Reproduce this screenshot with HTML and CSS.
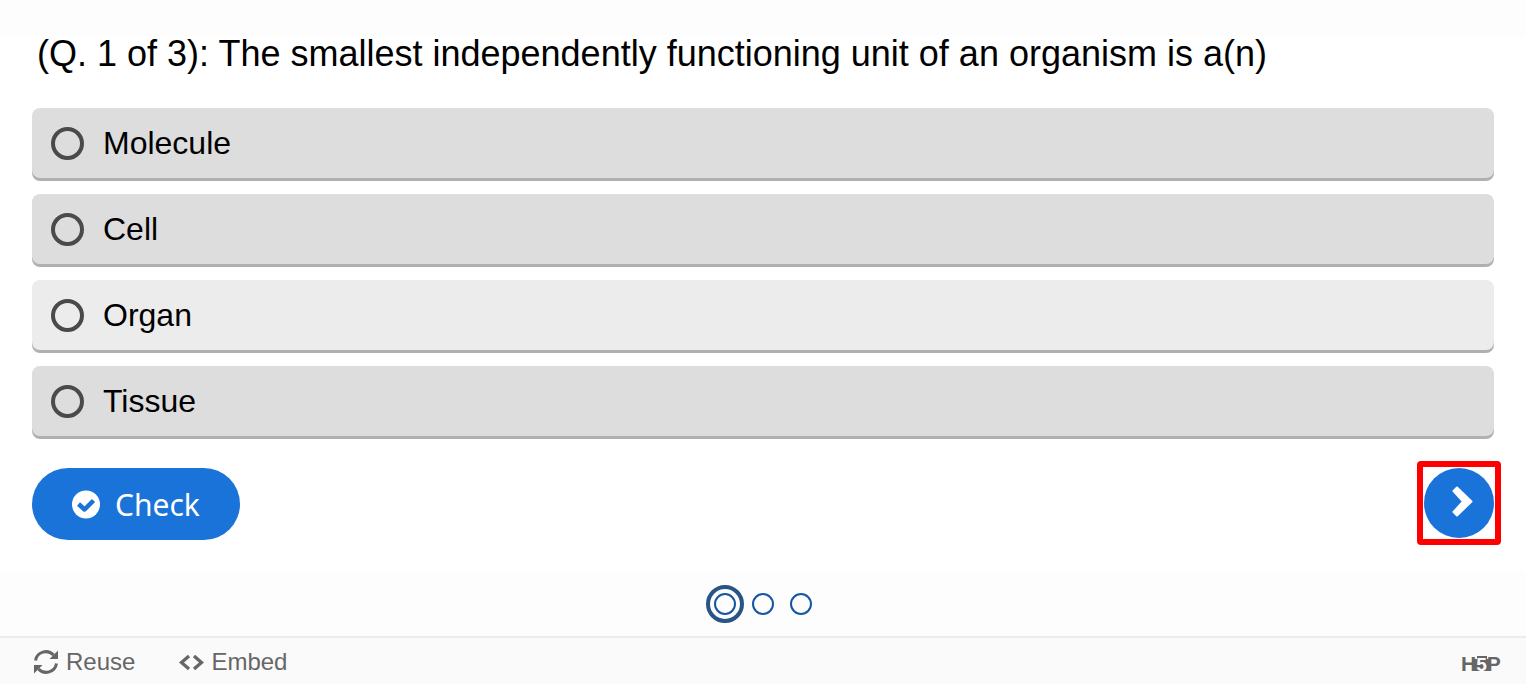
FILE: index.html
```html
<!DOCTYPE html>
<html lang="en">
<head>
  <meta charset="UTF-8" />
  <meta name="viewport" content="width=device-width, initial-scale=1.0"/>
  <title>Question Set</title>
  <link rel="stylesheet" href="styles.css">
</head>
<body>

<form class="question" onsubmit="return false">
  <h2 id="intro">(Q. 1 of 3): The smallest independently functioning unit of an organism is a(n)</h2>

  <div class="answers" role="radiogroup" aria-labelledby="intro">
    <label class="answer"><input type="radio" name="answer" value="molecule"> Molecule</label>
    <label class="answer"><input type="radio" name="answer" value="cell"> Cell</label>
    <label class="answer active"><input type="radio" name="answer" value="organ"> Organ</label>
    <label class="answer"><input type="radio" name="answer" value="tissue"> Tissue</label>
  </div>

  <div class="buttons">
    <button type="submit" class="check">
      <svg width="28" height="28" viewBox="0 0 28 28" aria-hidden="true">
        <circle cx="14" cy="14.500" r="14" fill="#fff"/>
        <path d="M6.500 14l6 5.500 9-9" fill="none" stroke="#1a73d9" stroke-width="4.500" stroke-linejoin="round"/>
      </svg>
      Check
    </button>
    <div class="next-frame">
      <button type="button" class="next" aria-label="Next question">
        <svg width="70" height="70" viewBox="0 0 70 70" aria-hidden="true">
          <path d="M33 19.500L47.500 33.500 33 47.500 29.500 44 39 33.500 29.500 23z" fill="#fff" stroke="#fff" stroke-width="2" stroke-linejoin="round"/>
        </svg>
      </button>
    </div>
  </div>
</form>

<nav class="dots" aria-label="Questions">
  <a href="#q1" class="dot current" aria-label="Question 1"></a>
  <a href="#q2" class="dot" aria-label="Question 2"></a>
  <a href="#q3" class="dot" aria-label="Question 3"></a>
</nav>

<footer>
  <button type="button" class="action">
    <svg width="26" height="26" viewBox="0 0 26 26" aria-hidden="true">
      <path d="M2.500 11.500A10.500 10.500 0 0 1 20.500 6M23.500 14.500A10.500 10.500 0 0 1 5.500 20" fill="none" stroke="#666" stroke-width="3"/>
      <path d="M25 1.500V10h-8.500zM1 24.500V16h8.500z" fill="#666"/>
    </svg>
    Reuse
  </button>
  <button type="button" class="action">
    <svg width="26" height="26" viewBox="0 0 26 26" aria-hidden="true">
      <path d="M11 7L3.500 13.500 11 20M16 7l7.500 6.500L16 20" fill="none" stroke="#666" stroke-width="3.300"/>
    </svg>
    Embed
  </button>
  <a href="#h5p" class="logo" aria-label="H5P">
    <svg width="42" height="26" viewBox="0 0 42 26" aria-hidden="true">
      <path d="M13 10h3V7h10v3h3v12H13z" fill="#666"/>
      <text x="0" y="22">H<tspan class="five">5</tspan>P</text>
    </svg>
  </a>
</footer>

</body>
</html>
```

FILE: styles.css
```css
* {
  box-sizing: border-box;
}
body {
  margin: 0;
  padding-top: 36px;
  font-family: "Liberation Sans", Arial, sans-serif;
  font-size: 32px;
  background: #fdfdfd;
  color: #000;
}
button {
  border: 0;
  cursor: pointer;
}
svg {
  display: block;
}
.question {
  background: #fff;
  padding: 0 32px 32px;
}
.question h2 {
  margin: 0 0 36px;
  padding-left: 5px;
  font-size: 36px;
  font-weight: normal;
  line-height: 36px;
}
.answers {
  display: grid;
  gap: 13px;
}
.answer {
  display: flex;
  align-items: center;
  gap: 19px;
  padding: 17px 19px;
  line-height: 36px;
  background: #ddd;
  border-radius: 8px;
  box-shadow: 0 3px 0 #b0b0b0;
  margin-bottom: 3px;
  cursor: pointer;
}
.answer.active {
  background: #ececec;
}
.answer input {
  appearance: none;
  width: 33px;
  height: 33px;
  margin: 0;
  border: 4px solid #4a4a4a;
  border-radius: 50%;
}
.answer input:checked {
  background: #1a73d9;
}
.buttons {
  display: flex;
  justify-content: space-between;
  align-items: flex-start;
  margin-top: 29px;
}
.check {
  display: flex;
  align-items: center;
  gap: 15px;
  height: 72px;
  padding: 0 40px;
  border-radius: 36px;
  background: #1a73d9;
  color: #fff;
  font-family: "Noto Sans", sans-serif;
  font-size: 30px;
}
.check svg {
  overflow: visible;
}
.next-frame {
  border: 6px solid #f00;
  border-radius: 4px;
  padding: 1px;
  margin: -7px;
}
.next {
  display: block;
  padding: 0;
  border-radius: 50%;
  background: #1a73d9;
}
.dots {
  display: flex;
  justify-content: center;
  align-items: center;
  gap: 16px;
  height: 64px;
}
.dot {
  width: 22px;
  height: 22px;
  border: 2px solid #1356a4;
  border-radius: 50%;
}
.dot.current {
  outline: 4px solid #285585;
  outline-offset: 4px;
}
footer {
  display: flex;
  align-items: center;
  gap: 43px;
  height: 48px;
  padding: 2px 23px 0 33px;
  background: #fafafa;
  border-top: 2px solid #ececec;
}
.action {
  display: flex;
  align-items: center;
  gap: 7px;
  padding: 0;
  background: none;
  color: #666;
  font-family: inherit;
  font-size: 24px;
}
.logo {
  margin-left: auto;
}
.logo text {
  font: bold 21px "Liberation Sans", Arial, sans-serif;
  fill: #666;
}
.logo .five {
  font-size: 19px;
  fill: #fafafa;
}
```
